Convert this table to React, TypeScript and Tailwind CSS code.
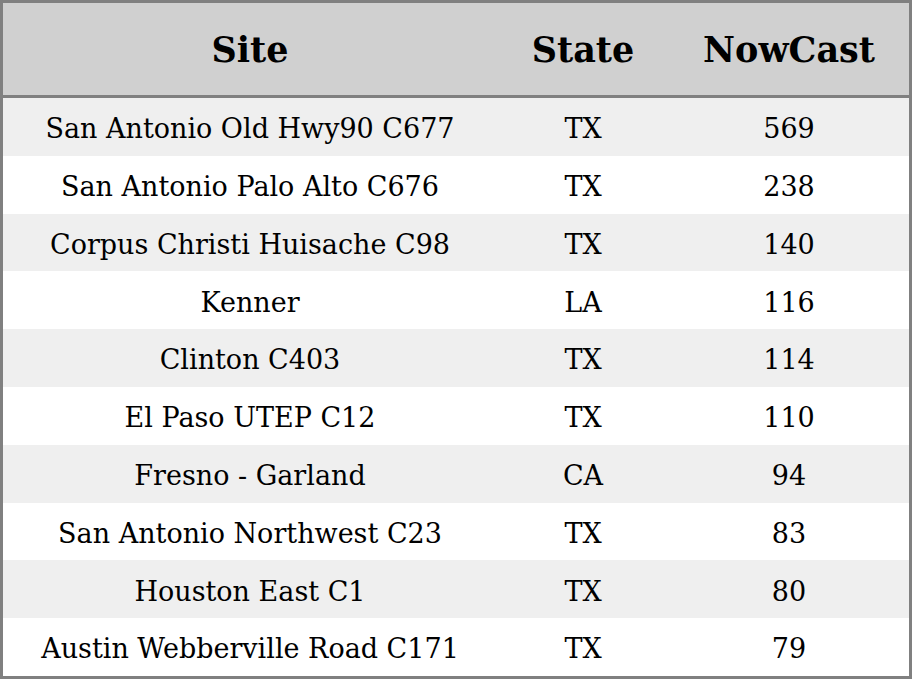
const rows: [string, string, string][] = [
  ["San Antonio Old Hwy90 C677", "TX", "569"],
  ["San Antonio Palo Alto C676", "TX", "238"],
  ["Corpus Christi Huisache C98", "TX", "140"],
  ["Kenner", "LA", "116"],
  ["Clinton C403", "TX", "114"],
  ["El Paso UTEP C12", "TX", "110"],
  ["Fresno - Garland", "CA", "94"],
  ["San Antonio Northwest C23", "TX", "83"],
  ["Houston East C1", "TX", "80"],
  ["Austin Webberville Road C171", "TX", "79"],
];

export default function App() {
  return (
    <div className="w-[912px] h-[679px] bg-white font-['DejaVu_Serif',serif] text-black">
      <div className="w-full h-full border-[3px] border-[#808080] flex flex-col">
        {/* header */}
        <div className="grid grid-cols-[494px_172px_1fr] h-[95px] bg-[#d0d0d0] border-b-[3px] border-[#808080] shrink-0 text-[35px] font-bold pt-[2px]">
          <div className="flex items-center justify-center">Site</div>
          <div className="flex items-center justify-center">State</div>
          <div className="flex items-center justify-center">NowCast</div>
        </div>
        {/* rows */}
        <div className="flex-1 flex flex-col">
          {rows.map((r, i) => (
            <div
              key={r[0]}
              className={
                "grid grid-cols-[494px_172px_1fr] flex-1 text-[27px] pt-[5px] " +
                (i % 2 === 0 ? "bg-[#efefef]" : "bg-white")
              }
            >
              <div className="flex items-center justify-center">{r[0]}</div>
              <div className="flex items-center justify-center">{r[1]}</div>
              <div className="flex items-center justify-center">{r[2]}</div>
            </div>
          ))}
        </div>
      </div>
    </div>
  );
}
